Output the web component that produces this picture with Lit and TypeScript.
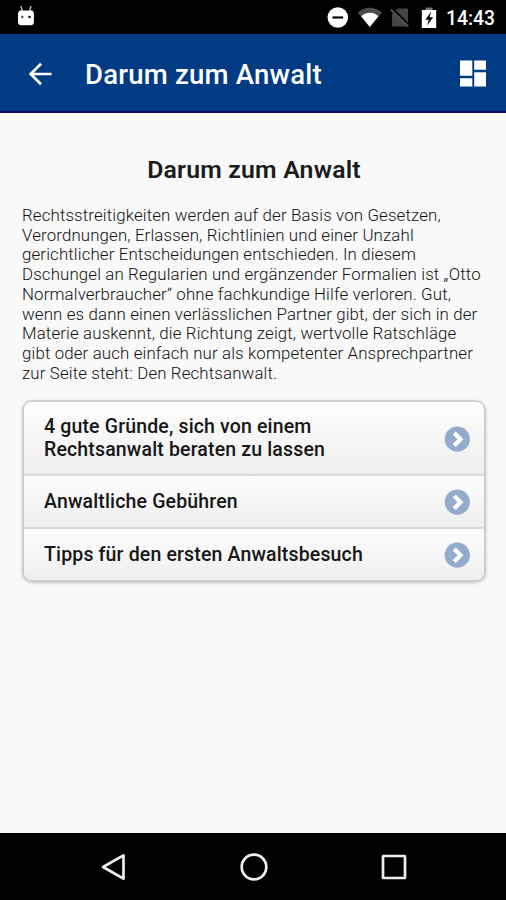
import { LitElement, html, css, svg } from "lit";
import { customElement, property } from "lit/decorators.js";

const PARAGRAPH = [
  "Rechtsstreitigkeiten werden auf der Basis von Gesetzen,",
  "Verordnungen, Erlassen, Richtlinien und einer Unzahl",
  "gerichtlicher Entscheidungen entschieden. In diesem",
  "Dschungel an Regularien und ergänzender Formalien ist „Otto",
  "Normalverbraucher“ ohne fachkundige Hilfe verloren. Gut,",
  "wenn es dann einen verlässlichen Partner gibt, der sich in der",
  "Materie auskennt, die Richtung zeigt, wertvolle Ratschläge",
  "gibt oder auch einfach nur als kompetenter Ansprechpartner",
  "zur Seite steht: Den Rechtsanwalt.",
];

const ENTRIES = [
  ["4 gute Gründe, sich von einem", "Rechtsanwalt beraten zu lassen"],
  ["Anwaltliche Gebühren"],
  ["Tipps für den ersten Anwaltsbesuch"],
];

@customElement("status-bar")
class StatusBar extends LitElement {
  static styles = css`
    :host { display: flex; align-items: center; height: 34px; background: #000; color: #fff; }
    svg { display: block; flex: none; }
    .droid { margin-left: 16px; margin-right: auto; }
    .time { width: 60px; font-size: 19.300px; font-weight: 500; line-height: 34px; padding-top: 3px; white-space: nowrap; }
  `;
  render() {
    return html`
      <svg class="droid" width="20" height="34" viewBox="0 0 20 34">
        <path d="M5 6l1.300 5M15 6l-1.300 5" stroke="#aaa" stroke-width="1.600" />
        <path d="M3.500 10.500h13l1.400 2.500v8.500c0 2.500-1 3.800-3.200 3.800H5.200c-2.200 0-3.200-1.300-3.200-3.800V13z" fill="#fff" />
        <circle cx="6.300" cy="17" r="1.200" fill="#555" /><circle cx="13.500" cy="17" r="1.300" fill="#111" />
      </svg>
      <svg width="119" height="34" viewBox="327 0 119 34">
        <circle cx="337.800" cy="17.500" r="10.300" fill="#fff" /><path d="M332.500 17.500h10.600" stroke="#000" stroke-width="2.200" />
        <path d="M357.600 12.600C364.600 6 375.200 6 382 12.600L369.800 27z" fill="#4c4c4c" />
        <path d="M361.200 16.200c5-4.600 12.200-4.600 17.200 0L369.800 27z" fill="#fff" />
        <path d="M397.500 8.500h10.500v18h-16V14z" fill="#454545" />
        <path d="M391.500 8l18 18" stroke="#000" stroke-width="2.500" /><path d="M390.800 9.500l17.500 17" stroke="#555" stroke-width="1.800" />
        <path d="M421.800 10h14.400v18h-14.400z" fill="#fff" />
        <path d="M425.500 7.500h7v2.500h-7z" fill="#777" />
        <path d="M431.300 11.500l-6 8.200h3.500l-1.600 5.800 6-8.200h-3.600z" fill="#000" />
      </svg>
      <div class="time">14:43</div>
    `;
  }
}

@customElement("app-header")
class AppHeader extends LitElement {
  static styles = css`
    :host { box-sizing: border-box; display: flex; align-items: center; height: 79px; background: #003b84; border-bottom: 2px solid #100b70; color: #fff; padding: 2px 19px 0 27px; }
    svg { display: block; }
    .title { margin: 0 auto 0 32px; font-size: 27.500px; font-weight: 500; line-height: 40px; letter-spacing: 0.230px; white-space: nowrap; padding-top: 3px; }
  `;
  render() {
    return html`
      <svg width="26" height="26" viewBox="0 0 26 26" fill="none" stroke="#fff" stroke-width="2.700">
        <path d="M24.500 13H3.500M14 2.800L3.700 13 14 23.200" />
      </svg>
      <h1 class="title">Darum zum Anwalt</h1>
      <svg width="28" height="28" viewBox="0 0 28 28" fill="#fff">
        <path d="M1 0.500h12.300v15.300H1zM15.200 0.500H27v9.300H15.200zM1 18.300h12.300v8.200H1zM15.200 12.200H27v14.300H15.200z" />
      </svg>
    `;
  }
}

@customElement("link-row")
class LinkRow extends LitElement {
  @property({ attribute: false }) lines: string[] = [];
  static styles = css`
    :host { box-sizing: border-box; display: flex; align-items: center; justify-content: space-between; padding: 0 14px 0 20px; background: linear-gradient(#fefefe, #eee); color: #161616; }
    .label { font-size: 19.500px; font-weight: 500; line-height: 22.500px; letter-spacing: 0.155px; padding-top: 1px; white-space: nowrap; }
    svg { display: block; flex: none; margin-top: 1px; }
  `;
  render() {
    return html`
      <div class="label">${this.lines.map((l) => html`<div>${l}</div>`)}</div>
      <svg width="26" height="26" viewBox="0 0 26 26">
        <circle cx="13.300" cy="13.200" r="12.600" fill="#93acce" />
        <path d="M10.300 7L16.500 13.200 10.300 19.400" fill="none" stroke="#fff" stroke-width="4.200" />
      </svg>
    `;
  }
}

@customElement("app-root")
class AppRoot extends LitElement {
  static styles = css`
    :host { display: flex; flex-direction: column; height: 900px; overflow: hidden; background: #f9f9f9; font-family: Roboto, sans-serif; }
    main { flex: 1; padding: 0 20px 0 22px; }
    .heading { margin: 41px 0 0; font-size: 24.800px; font-weight: 600; line-height: 32px; letter-spacing: 0.200px; text-align: center; color: #1c1c1c; }
    .text { margin: 20px 0 0; font-size: 16.850px; font-weight: 300; line-height: 19.700px; letter-spacing: 0.135px; color: #111; white-space: nowrap; }
    .list { box-sizing: border-box; width: 464px; margin-top: 17px; border: 2px solid #cdcdcd; border-top-color: #d0d0d0; border-radius: 10px; overflow: hidden; box-shadow: 0 1px 3px rgba(0, 0, 0, 0.2); }
    .row { height: 53px; border-top: 2px solid #d8d8d8; }
    .row.first { height: 72px; border-top: 0; }
    nav { display: flex; align-items: center; justify-content: space-between; height: 67px; padding: 0 98px 0 99px; background: #000; }
    nav svg { display: block; }
  `;
  render() {
    return html`
      <status-bar></status-bar>
      <app-header></app-header>
      <main>
        <h2 class="heading">Darum zum Anwalt</h2>
        <div class="text">${PARAGRAPH.map((l) => html`<div>${l}</div>`)}</div>
        <div class="list">
          ${ENTRIES.map((e, i) => html`<link-row class="row ${i === 0 ? "first" : ""}" .lines=${e}></link-row>`)}
        </div>
      </main>
      <nav>
        ${[
          svg`<path d="M4 14L24.500 2.300V25.700z" />`,
          svg`<circle cx="14" cy="14" r="12.300" />`,
          svg`<rect x="3" y="3" width="22" height="22" rx="0.500" />`,
        ].map((s) => html`<svg width="28" height="28" viewBox="0 0 28 28" fill="none" stroke="#eee" stroke-width="2.700" stroke-linejoin="round">${s}</svg>`)}
      </nav>
    `;
  }
}
